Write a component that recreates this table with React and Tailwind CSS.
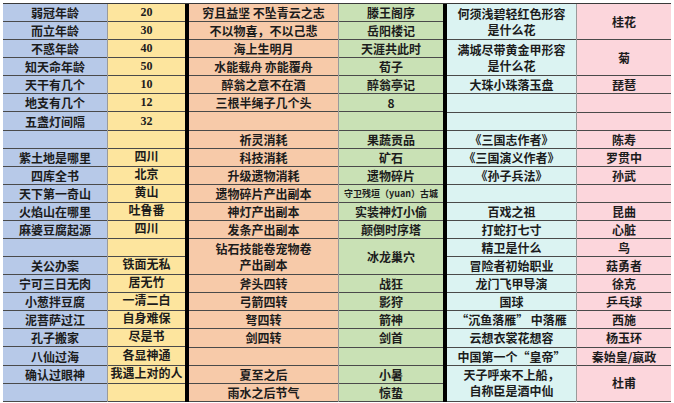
import React from "react";

const S = (t) => ({ t, s: 1 });
const D = (t) => ({ t, s: 2 });

const cols = [
  {
    w: "w-[105px]",
    bg: "bg-[#b7c9e8]",
    br: true,
    cells: [
      "弱冠年龄", "而立年龄", "不惑年龄", "知天命年龄", "天干有几个", "地支有几个", "五盏灯间隔", "",
      "紫土地是哪里", "四库全书", "天下第一奇山", "火焰山在哪里", "麻婆豆腐起源", "",
      "关公办案", "宁可三日无肉", "小葱拌豆腐", "泥菩萨过江", "孔子搬家", "八仙过海", "确认过眼神", "",
    ].map(S),
  },
  {
    w: "w-[77px]",
    bg: "bg-[#fde59e]",
    num: true,
    cells: [
      "20", "30", "40", "50", "10", "12", "32", "",
      "四川", "北京", "黄山", "吐鲁番", "四川", "",
      "铁面无私", "居无竹", "一清二白", "自身难保", "尽是书", "各显神通", "我遇上对的人", "",
    ].map(S),
  },
  { divider: true },
  {
    w: "w-[150px]",
    bg: "bg-[#f7caa9]",
    br: true,
    cells: [
      S("穷且益坚 不坠青云之志"), S("不以物喜，不以己悲"), S("海上生明月"), S("水能载舟 亦能覆舟"),
      S("醉翁之意不在酒"), S("三根半绳子几个头"), S(""), S("祈灵消耗"), S("科技消耗"), S("升级遗物消耗"),
      S("遗物碎片产出副本"), S("神灯产出副本"), S("发条产出副本"), D("钻石技能卷宠物卷\n产出副本"),
      S("斧头四转"), S("弓箭四转"), S("弩四转"), S("剑四转"), S(""), S("夏至之后"), S("雨水之后节气"),
    ],
  },
  {
    w: "w-[104px]",
    bg: "bg-[#c9e1b5]",
    cells: [
      S("滕王阁序"), S("岳阳楼记"), S("天涯共此时"), S("荀子"), S("醉翁亭记"), S("8"), S(""),
      S("果蔬贡品"), S("矿石"), S("遗物碎片"), { t: "守卫残垣（yuan）古城", s: 1, small: true },
      S("实装神灯小偷"), S("颠倒时序塔"), D("冰龙巢穴"), S("战狂"), S("影狩"), S("箭神"), S("剑首"),
      S(""), S("小暑"), S("惊蛰"),
    ],
  },
  { divider: true },
  {
    w: "w-[130px]",
    bg: "bg-[#dbf3f2]",
    br: true,
    cells: [
      D("何须浅碧轻红色形容\n是什么花"), D("满城尽带黄金甲形容\n是什么花"), S("大珠小珠落玉盘"), S(""), S(""),
      S("《三国志作者》"), S("《三国演义作者》"), S("《孙子兵法》"), S(""), S("百戏之祖"), S("打蛇打七寸"),
      S("精卫是什么"), S("冒险者初始职业"), S("龙门飞甲导演"), S("国球"), S("“沉鱼落雁” 中落雁"),
      S("云想衣裳花想容"), S("中国第一个“皇帝”"), D("天子呼来不上船，\n自称臣是酒中仙"),
    ],
  },
  {
    w: "w-[94px]",
    bg: "bg-[#fcd6dc]",
    cells: [
      D("桂花"), D("菊"), S("琵琶"), S(""), S(""), S("陈寿"), S("罗贯中"), S("孙武"), S(""), S("昆曲"),
      S("心脏"), S("鸟"), S("菇勇者"), S("徐克"), S("乒乓球"), S("西施"), S("杨玉环"), S("秦始皇/嬴政"),
      D("杜甫"),
    ],
  },
];

function Cell({ c, num }) {
  const lines = c.t.split("\n");
  return (
    <div
      className={
        (c.s === 2 ? "h-[36.18px] leading-[16px] " : "h-[18.09px] leading-[17px] ") +
        "flex flex-col items-center justify-center border-b border-[#4a4a4a] text-center whitespace-nowrap " +
        (c.small ? "text-[9px] " : "text-[12px] ") +
        (num ? "font-['Liberation_Serif','Noto_Sans_CJK_SC',serif] " : "")
      }
    >
      {lines.map((l, i) => (
        <span key={i}>{l}</span>
      ))}
    </div>
  );
}

export default function App() {
  return (
    <div className="w-[674px] h-[403px] bg-white pt-[3px] pl-[3px] overflow-hidden">
      <div className="flex w-fit border-t border-[#3a3a3a] font-['Noto_Sans_CJK_SC',sans-serif] font-bold text-[#1c1c1c]">
        {cols.map((col, i) =>
          col.divider ? (
            <div key={i} className="w-[4px] bg-black" />
          ) : (
            <div
              key={i}
              className={
                "flex flex-col " + col.w + " " + col.bg + (col.br ? " border-r border-[#9a9a9a]" : "")
              }
            >
              {col.cells.map((c, j) => (
                <Cell key={j} c={c} num={col.num} />
              ))}
            </div>
          )
        )}
      </div>
    </div>
  );
}
